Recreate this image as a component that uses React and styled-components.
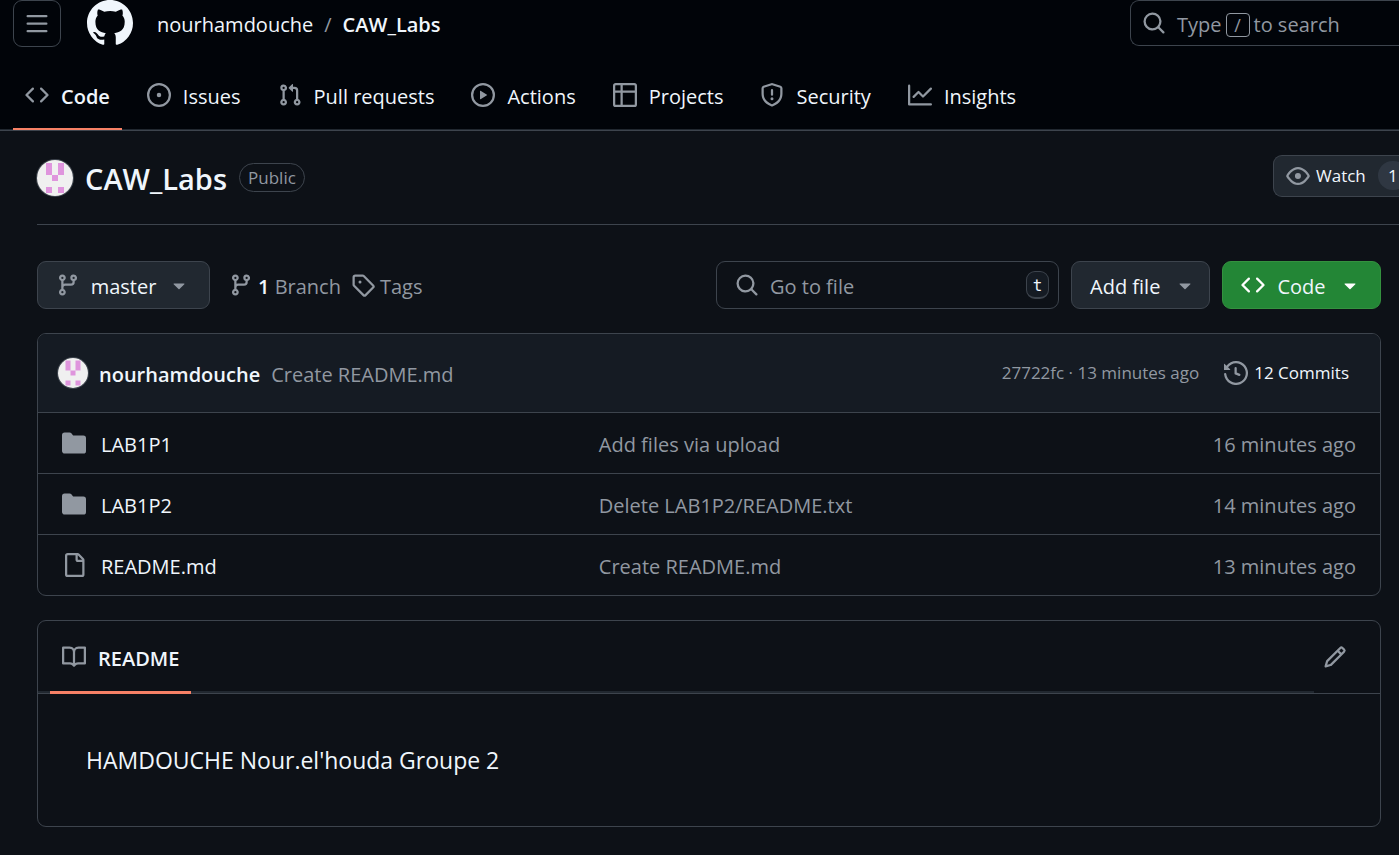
import React from "react";
import styled, { createGlobalStyle } from "styled-components";

const color = {
  canvas: "#0d1117",
  inset: "#010409",
  panel: "#151b23",
  control: "#212830",
  border: "#3d444d",
  text: "#f0f6fc",
  muted: "#9198a1",
  accent: "#f78166",
  green: "#238636",
};

const GlobalStyle = createGlobalStyle`
  *, *::before, *::after { box-sizing: border-box; }
  body {
    margin: 0;
    min-height: 100vh;
    background: ${color.canvas};
    color: ${color.text};
    font-family: "Open Sans", "Noto Sans", sans-serif;
    font-size: 20px;
    line-height: 30px;
  }
  button, input { font: inherit; color: inherit; }
  button { cursor: pointer; }
  a { color: inherit; text-decoration: none; }
  h1, p { margin: 0; }
`;

const paths = {
  menu: "M1 2.75A.75.75 0 0 1 1.75 2h12.5a.75.75 0 0 1 0 1.5H1.75A.75.75 0 0 1 1 2.75Zm0 5A.75.75 0 0 1 1.75 7h12.5a.75.75 0 0 1 0 1.5H1.75A.75.75 0 0 1 1 7.75ZM1.75 12h12.5a.75.75 0 0 1 0 1.5H1.75a.75.75 0 0 1 0-1.5Z",
  github: "M8 0c4.42 0 8 3.58 8 8a8.013 8.013 0 0 1-5.45 7.59c-.4.08-.55-.17-.55-.38 0-.27.01-1.13.01-2.2 0-.75-.25-1.23-.54-1.48 1.78-.2 3.65-.88 3.65-3.95 0-.88-.31-1.59-.82-2.15.08-.2.36-1.02-.08-2.12 0 0-.67-.22-2.2.82-.64-.18-1.32-.27-2-.27-.68 0-1.36.09-2 .27-1.53-1.03-2.2-.82-2.2-.82-.44 1.1-.16 1.92-.08 2.12-.51.56-.82 1.28-.82 2.15 0 3.06 1.86 3.75 3.64 3.95-.23.2-.44.55-.51 1.07-.46.21-1.61.55-2.33-.66-.15-.24-.6-.83-1.23-.82-.67.01-.27.38.01.53.34.19.73.9.82 1.13.16.45.68 1.31 2.69.94 0 .67.01 1.3.01 1.49 0 .21-.15.45-.55.38A7.995 7.995 0 0 1 0 8c0-4.42 3.58-8 8-8Z",
  code: "m11.28 3.22 4.25 4.25a.75.75 0 0 1 0 1.06l-4.25 4.25a.749.749 0 0 1-1.275-.326.749.749 0 0 1 .215-.734L13.94 8l-3.72-3.72a.749.749 0 0 1 .326-1.275.749.749 0 0 1 .734.215Zm-6.56 0a.751.751 0 0 1 1.042.018.751.751 0 0 1 .018 1.042L2.06 8l3.72 3.72a.749.749 0 0 1-.326 1.275.749.749 0 0 1-.734-.215L.47 8.53a.75.75 0 0 1 0-1.06Z",
  issue: "M8 9.5a1.5 1.5 0 1 0 0-3 1.5 1.5 0 0 0 0 3Z M8 0a8 8 0 1 1 0 16A8 8 0 0 1 8 0ZM1.5 8a6.5 6.5 0 1 0 13 0 6.5 6.5 0 0 0-13 0Z",
  pull: "M1.5 3.25a2.25 2.25 0 1 1 3 2.122v5.256a2.251 2.251 0 1 1-1.5 0V5.372A2.25 2.25 0 0 1 1.5 3.25Zm5.677-.177L9.573.677A.25.25 0 0 1 10 .854V2.5h1A2.5 2.5 0 0 1 13.5 5v5.628a2.251 2.251 0 1 1-1.5 0V5a1 1 0 0 0-1-1h-1v1.646a.25.25 0 0 1-.427.177L7.177 3.427a.25.25 0 0 1 0-.354ZM3.75 2.5a.75.75 0 1 0 0 1.5.75.75 0 0 0 0-1.5Zm0 9.5a.75.75 0 1 0 0 1.5.75.75 0 0 0 0-1.5Zm8.25.75a.75.75 0 1 0 1.5 0 .75.75 0 0 0-1.5 0Z",
  play: "M8 0a8 8 0 1 1 0 16A8 8 0 0 1 8 0ZM1.5 8a6.5 6.5 0 1 0 13 0 6.5 6.5 0 0 0-13 0Zm4.879-2.773 4.264 2.559a.25.25 0 0 1 0 .428l-4.264 2.559A.25.25 0 0 1 6 10.559V5.442a.25.25 0 0 1 .379-.215Z",
  table: "M0 1.75C0 .784.784 0 1.75 0h12.5C15.216 0 16 .784 16 1.75v12.5A1.75 1.75 0 0 1 14.25 16H1.75A1.75 1.75 0 0 1 0 14.25ZM6.5 6.5v8h7.75a.25.25 0 0 0 .25-.25V6.5Zm8-1.5V1.75a.25.25 0 0 0-.25-.25H6.5V5Zm-13 1.5v7.75c0 .138.112.25.25.25H5v-8ZM5 5V1.5H1.75a.25.25 0 0 0-.25.25V5Z",
  shield: "M7.467.133a1.748 1.748 0 0 1 1.066 0l5.25 1.68A1.75 1.75 0 0 1 15 3.48V7c0 1.566-.32 3.182-1.303 4.682-.983 1.498-2.585 2.813-5.032 3.855a1.697 1.697 0 0 1-1.33 0c-2.447-1.042-4.049-2.357-5.032-3.855C1.32 10.182 1 8.566 1 7V3.48a1.75 1.75 0 0 1 1.217-1.667Zm.61 1.429a.25.25 0 0 0-.153 0l-5.25 1.68a.25.25 0 0 0-.174.238V7c0 1.358.275 2.666 1.057 3.86.784 1.194 2.121 2.34 4.366 3.297a.196.196 0 0 0 .154 0c2.245-.956 3.582-2.104 4.366-3.298C13.225 9.666 13.5 8.36 13.5 7V3.48a.251.251 0 0 0-.174-.237l-5.25-1.68ZM8.75 4.75v3a.75.75 0 0 1-1.5 0v-3a.75.75 0 0 1 1.5 0ZM9 10.5a1 1 0 1 1-2 0 1 1 0 0 1 2 0Z",
  graph: "M1.5 1.75V13.5h13.75a.75.75 0 0 1 0 1.5H.75a.75.75 0 0 1-.75-.75V1.75a.75.75 0 0 1 1.5 0Zm14.28 2.53-5.25 5.25a.75.75 0 0 1-1.06 0L7 7.06 4.28 9.78a.751.751 0 0 1-1.042-.018.751.751 0 0 1-.018-1.042l3.25-3.25a.75.75 0 0 1 1.06 0L10 7.94l4.72-4.72a.751.751 0 0 1 1.042.018.751.751 0 0 1 .018 1.042Z",
  search: "M10.68 11.74a6 6 0 0 1-7.922-8.982 6 6 0 0 1 8.982 7.922l3.04 3.04a.749.749 0 0 1-.326 1.275.749.749 0 0 1-.734-.215ZM11.5 7a4.499 4.499 0 1 0-8.997 0A4.499 4.499 0 0 0 11.5 7Z",
  eye: "M8 2c1.981 0 3.671.992 4.933 2.078 1.27 1.091 2.187 2.345 2.637 3.023a1.62 1.62 0 0 1 0 1.798c-.45.678-1.367 1.932-2.637 3.023C11.67 13.008 9.981 14 8 14c-1.981 0-3.671-.992-4.933-2.078C1.797 10.83.88 9.576.43 8.898a1.62 1.62 0 0 1 0-1.798c.45-.677 1.367-1.931 2.637-3.022C4.33 2.992 6.019 2 8 2ZM1.679 7.932a.12.12 0 0 0 0 .136c.411.622 1.241 1.75 2.366 2.717C5.176 11.758 6.527 12.5 8 12.5c1.473 0 2.825-.742 3.955-1.715 1.124-.967 1.954-2.096 2.366-2.717a.12.12 0 0 0 0-.136c-.412-.621-1.242-1.75-2.366-2.717C10.824 4.242 9.473 3.5 8 3.5c-1.473 0-2.825.742-3.955 1.715-1.124.967-1.954 2.096-2.366 2.717ZM8 10a2 2 0 1 1-.001-3.999A2 2 0 0 1 8 10Z",
  branch: "M9.5 3.25a2.25 2.25 0 1 1 3 2.122V6A2.5 2.5 0 0 1 10 8.5H6a1 1 0 0 0-1 1v1.128a2.251 2.251 0 1 1-1.5 0V5.372a2.25 2.25 0 1 1 1.5 0v1.836A2.493 2.493 0 0 1 6 7h4a1 1 0 0 0 1-1v-.628A2.25 2.25 0 0 1 9.5 3.25Zm-6 0a.75.75 0 1 0 1.5 0 .75.75 0 0 0-1.5 0Zm8.25-.75a.75.75 0 1 0 0 1.5.75.75 0 0 0 0-1.5ZM4.25 12a.75.75 0 1 0 0 1.5.75.75 0 0 0 0-1.5Z",
  tag: "M1 7.775V2.75C1 1.784 1.784 1 2.75 1h5.025c.464 0 .91.184 1.238.513l6.25 6.25a1.75 1.75 0 0 1 0 2.474l-5.026 5.026a1.75 1.75 0 0 1-2.474 0l-6.25-6.25A1.752 1.752 0 0 1 1 7.775Zm1.5 0c0 .066.026.13.073.177l6.25 6.25a.25.25 0 0 0 .354 0l5.025-5.025a.25.25 0 0 0 0-.354l-6.25-6.25a.25.25 0 0 0-.177-.073H2.75a.25.25 0 0 0-.25.25ZM6 5a1 1 0 1 1 0 2 1 1 0 0 1 0-2Z",
  caret: "m4.427 7.427 3.396 3.396a.25.25 0 0 0 .354 0l3.396-3.396A.25.25 0 0 0 11.396 7H4.604a.25.25 0 0 0-.177.427Z",
  history: "m.427 1.927 1.215 1.215a8.002 8.002 0 1 1-1.6 5.685.75.75 0 1 1 1.493-.154 6.5 6.5 0 1 0 1.18-4.458l1.358 1.358A.25.25 0 0 1 3.896 6H.25A.25.25 0 0 1 0 5.75V2.104a.25.25 0 0 1 .427-.177ZM7.75 4a.75.75 0 0 1 .75.75v2.992l2.028.812a.75.75 0 0 1-.557 1.392l-2.5-1A.751.751 0 0 1 7 8.25v-3.5A.75.75 0 0 1 7.75 4Z",
  folder: "M1.75 1A1.75 1.75 0 0 0 0 2.75v10.5C0 14.216.784 15 1.75 15h12.5A1.75 1.75 0 0 0 16 13.25v-8.5A1.75 1.75 0 0 0 14.25 3H7.5a.25.25 0 0 1-.2-.1l-.9-1.2C6.07 1.26 5.55 1 5 1H1.75Z",
  file: "M2 1.75C2 .784 2.784 0 3.75 0h6.586c.464 0 .909.184 1.237.513l2.914 2.914c.329.328.513.773.513 1.237v9.586A1.75 1.75 0 0 1 13.25 16h-9.5A1.75 1.75 0 0 1 2 14.25Zm1.75-.25a.25.25 0 0 0-.25.25v12.5c0 .138.112.25.25.25h9.5a.25.25 0 0 0 .25-.25V6h-2.75A1.75 1.75 0 0 1 9 4.25V1.5Zm6.75.062V4.25c0 .138.112.25.25.25h2.688l-.011-.013-2.914-2.914-.013-.011Z",
  book: "M0 1.75A.75.75 0 0 1 .75 1h4.253c1.227 0 2.317.59 3 1.501A3.743 3.743 0 0 1 11.006 1h4.245a.75.75 0 0 1 .75.75v10.5a.75.75 0 0 1-.75.75h-4.507a2.25 2.25 0 0 0-1.591.659l-.622.621a.75.75 0 0 1-1.06 0l-.622-.621A2.25 2.25 0 0 0 5.258 13H.75a.75.75 0 0 1-.75-.75Zm7.251 10.324.004-5.073-.002-2.253A2.25 2.25 0 0 0 5.003 2.5H1.5v9h3.757a3.75 3.75 0 0 1 1.994.574ZM8.755 4.75l-.004 7.322a3.752 3.752 0 0 1 1.992-.572H14.5v-9h-3.495a2.25 2.25 0 0 0-2.25 2.25Z",
  pencil: "M11.013 1.427a1.75 1.75 0 0 1 2.474 0l1.086 1.086a1.75 1.75 0 0 1 0 2.474l-8.61 8.61c-.21.21-.47.364-.756.445l-3.251.93a.75.75 0 0 1-.927-.928l.929-3.25c.081-.286.235-.547.445-.758l8.61-8.61Zm.176 4.823L9.75 4.81l-6.286 6.287a.253.253 0 0 0-.064.108l-.558 1.953 1.953-.558a.253.253 0 0 0 .108-.064Zm1.238-3.763a.25.25 0 0 0-.354 0L10.811 3.75l1.439 1.44 1.263-1.263a.25.25 0 0 0 0-.354Z",
};

const Glyph = styled.svg`
  display: block;
  flex: none;
  width: ${(p) => p.$size}px;
  height: ${(p) => p.$size}px;
  fill: ${(p) => p.$tone};
`;

function Icon({ name, size = 24, tone = color.muted }) {
  return (
    <Glyph viewBox="0 0 16 16" $size={size} $tone={tone} aria-hidden="true">
      <path d={paths[name]} />
    </Glyph>
  );
}

const Face = styled.svg`
  display: block;
  flex: none;
  width: ${(p) => p.$size}px;
  height: ${(p) => p.$size}px;
  border-radius: 50%;
  box-shadow: 0 0 0 1px ${color.border};
`;

function Avatar({ size }) {
  return (
    <Face viewBox="0 0 36 36" $size={size} role="img" aria-label="nourhamdouche">
      <rect width="36" height="36" fill="#f0f0f0" />
      <path
        fill="#df95dd"
        d="M9 3h6v12h-6zM21 3h6v12h-6zM15 15h6v6h-6zM9 27h6v6h-6zM21 27h6v6h-6z"
      />
    </Face>
  );
}

const Label = styled.span`
  display: inline-block;
  padding-top: 4px;
`;

const Page = styled.div`
  overflow-x: hidden;
`;

const Header = styled.header`
  background: ${color.inset};
  border-bottom: 1px solid ${color.border};
`;

const TopBar = styled.div`
  display: flex;
  align-items: flex-start;
  height: 61px;
  padding-left: 13px;
`;

const MenuButton = styled.button`
  display: grid;
  place-items: center;
  width: 48px;
  height: 47px;
  padding: 0;
  background: transparent;
  border: 1px solid ${color.border};
  border-radius: 9px;
`;

const Logo = styled.a`
  margin-left: 26px;
`;

const Crumbs = styled.nav`
  display: flex;
  gap: 11px;
  margin-left: 24px;
  line-height: 50px;
`;

const Slash = styled.span`
  color: ${color.muted};
`;

const Strong = styled.a`
  font-weight: 600;
`;

const SearchButton = styled.button`
  display: flex;
  align-items: center;
  gap: 11px;
  width: 269px;
  height: 46px;
  margin-left: auto;
  padding: 0 0 0 11px;
  background: transparent;
  color: ${color.muted};
  border: 1px solid ${color.border};
  border-right: 0;
  border-radius: 9px 0 0 9px;
`;

const SearchHint = styled.span`
  display: flex;
  align-items: center;
  gap: 4px;
  padding-top: 3px;
`;

const SlashKey = styled.kbd`
  width: 24px;
  height: 24px;
  border: 1px solid ${color.muted};
  border-radius: 4px;
  font: inherit;
  font-size: 18px;
  line-height: 22px;
  text-align: center;
`;

const RepoNav = styled.nav`
  display: flex;
  gap: 13px;
  padding-left: 13px;
  box-shadow: inset 0 -1px ${color.control};
`;

const Tab = styled.a`
  display: flex;
  align-items: center;
  gap: 12px;
  height: 69px;
  padding: 0 12px;
  font-weight: ${(p) => (p.$active ? 600 : 400)};
  border-bottom: 2px solid ${(p) => (p.$active ? color.accent : "transparent")};
  margin-bottom: ${(p) => (p.$active ? "-1px" : "0")};
`;

const RepoHeader = styled.div`
  display: flex;
  align-items: center;
  height: 94px;
  margin-left: 37px;
  border-bottom: 1px solid ${color.border};
`;

const RepoName = styled.h1`
  margin: 0 12px;
  padding-top: 2px;
  font-size: 29px;
  font-weight: 600;
  line-height: 42px;
`;

const Visibility = styled.span`
  height: 29px;
  padding: 0 8px;
  border: 1px solid ${color.border};
  border-radius: 15px;
  color: ${color.muted};
  font-size: 17px;
  line-height: 28px;
`;

const WatchButton = styled.button`
  display: flex;
  align-items: center;
  gap: 6px;
  width: 126px;
  height: 42px;
  margin: 0 0 4px auto;
  padding: 0 0 0 12px;
  background: ${color.control};
  border: 1px solid ${color.border};
  border-right: 0;
  border-radius: 9px 0 0 9px;
  font-size: 17px;
  overflow: hidden;
`;

const Counter = styled.span`
  flex: none;
  width: 30px;
  height: 29px;
  margin-left: 6px;
  background: #2f3742;
  border-radius: 15px;
  line-height: 29px;
  text-align: center;
`;

const Main = styled.main`
  display: flex;
  flex-direction: column;
  gap: 24px;
  padding: 36px 18px 28px 37px;
`;

const Toolbar = styled.div`
  display: flex;
  align-items: center;
  gap: 12px;
`;

const Button = styled.button`
  display: flex;
  align-items: center;
  justify-content: space-between;
  height: 48px;
  width: ${(p) => p.$width}px;
  padding: 0 ${(p) => p.$end || 18}px 0 18px;
  background: ${(p) => (p.$primary ? color.green : color.control)};
  border: 1px solid ${(p) => (p.$primary ? "#34913f" : color.border)};
  border-radius: 9px;
  font-weight: ${(p) => (p.$primary ? 500 : 400)};
`;

const RefLinks = styled.div`
  display: flex;
  gap: 10px;
  margin-left: 7px;
`;

const RefLink = styled.a`
  display: flex;
  align-items: center;
  gap: 5px;
  color: ${color.muted};

  b {
    color: ${color.text};
    font-weight: 600;
  }
`;

const FileSearch = styled.label`
  display: flex;
  align-items: center;
  gap: 11px;
  width: 343px;
  height: 48px;
  margin-left: auto;
  padding: 0 9px 0 18px;
  border: 1px solid ${color.border};
  border-radius: 9px;
`;

const FileInput = styled.input`
  flex: 1;
  min-width: 0;
  padding: 4px 0 0;
  background: transparent;
  border: 0;
  outline: 0;

  &::placeholder {
    color: ${color.muted};
    opacity: 1;
  }
`;

const KeyCap = styled.kbd`
  width: 23px;
  height: 28px;
  background: ${color.panel};
  border: 1px solid ${color.border};
  border-bottom-width: 2px;
  border-radius: 9px;
  font-family: "DejaVu Sans Mono", monospace;
  font-size: 16px;
  line-height: 27px;
  text-align: center;
`;

const Box = styled.section`
  border: 1px solid ${color.border};
  border-radius: 9px;
  overflow: hidden;
`;

const CommitBar = styled.div`
  display: flex;
  align-items: center;
  gap: 11px;
  height: 78px;
  padding: 0 31px 0 20px;
  background: ${color.panel};
`;

const Muted = styled.a`
  color: ${color.muted};
`;

const CommitMeta = styled.div`
  display: flex;
  align-items: center;
  gap: 25px;
  margin-left: auto;
  color: ${color.muted};
  font-size: 17px;
`;

const CommitCount = styled.a`
  display: flex;
  align-items: center;
  gap: 6px;
  color: ${color.text};
`;

const FileTable = styled.table`
  width: 100%;
  border-collapse: separate;
  border-spacing: 0;
  table-layout: fixed;
`;

const Cell = styled.td`
  width: ${(p) => p.$width};
  height: 61px;
  padding: 0 24px;
  border-top: 1px solid ${color.border};
  color: ${color.muted};
  text-align: ${(p) => p.$align || "left"};
`;

const FileLink = styled.a`
  display: flex;
  align-items: center;
  gap: 15px;
  color: ${color.text};
`;

const ReadmeBar = styled.div`
  display: flex;
  align-items: center;
  height: 73px;
  border-bottom: 1px solid ${color.border};
`;

const ReadmeTabs = styled.nav`
  display: flex;
  flex: 1;
  height: 72px;
  padding-left: 12px;
  box-shadow: inset 0 -2px ${color.control};
`;

const ReadmeTab = styled(Tab)`
  height: 73px;
  padding-top: 2px;
  border-bottom-width: 3px;
`;

const EditButton = styled.button`
  display: grid;
  place-items: center;
  width: 42px;
  height: 42px;
  margin-right: 24px;
  padding: 0;
  background: transparent;
  border: 0;
`;

const ReadmeBody = styled.p`
  padding: 48px;
  font-size: 23px;
  line-height: 36px;
`;

const tabs = [
  ["code", "Code"],
  ["issue", "Issues"],
  ["pull", "Pull requests"],
  ["play", "Actions"],
  ["table", "Projects"],
  ["shield", "Security"],
  ["graph", "Insights"],
];

const files = [
  ["folder", "LAB1P1", "Add files via upload", "16 minutes ago"],
  ["folder", "LAB1P2", "Delete LAB1P2/README.txt", "14 minutes ago"],
  ["file", "README.md", "Create README.md", "13 minutes ago"],
];

export default function App() {
  return (
    <Page>
      <GlobalStyle />
      <Header>
        <TopBar>
          <MenuButton aria-label="Open menu">
            <Icon name="menu" />
          </MenuButton>
          <Logo href="#" aria-label="Homepage">
            <Icon name="github" size={46} tone={color.text} />
          </Logo>
          <Crumbs aria-label="Breadcrumb">
            <a href="#">nourhamdouche</a>
            <Slash>/</Slash>
            <Strong href="#">CAW_Labs</Strong>
          </Crumbs>
          <SearchButton>
            <Icon name="search" />
            <SearchHint>
              Type <SlashKey>/</SlashKey> to search
            </SearchHint>
          </SearchButton>
        </TopBar>
        <RepoNav aria-label="Repository">
          {tabs.map(([icon, label], i) => (
            <Tab key={label} href="#" $active={i === 0}>
              <Icon name={icon} />
              <Label>{label}</Label>
            </Tab>
          ))}
        </RepoNav>
      </Header>

      <RepoHeader>
        <Avatar size={36} />
        <RepoName>CAW_Labs</RepoName>
        <Visibility>Public</Visibility>
        <WatchButton>
          <Icon name="eye" />
          Watch
          <Counter>1</Counter>
        </WatchButton>
      </RepoHeader>

      <Main>
        <Toolbar>
          <Button $width={173}>
            <Icon name="branch" />
            <Label>master</Label>
            <Icon name="caret" />
          </Button>
          <RefLinks>
            <RefLink href="#">
              <Icon name="branch" />
              <Label>
                <b>1</b> Branch
              </Label>
            </RefLink>
            <RefLink href="#">
              <Icon name="tag" />
              <Label>Tags</Label>
            </RefLink>
          </RefLinks>
          <FileSearch>
            <Icon name="search" />
            <FileInput type="text" placeholder="Go to file" aria-label="Go to file" />
            <KeyCap>t</KeyCap>
          </FileSearch>
          <Button $width={139} $end={12}>
            <Label>Add file</Label>
            <Icon name="caret" />
          </Button>
          <Button $width={159} $primary>
            <Icon name="code" tone="#ffffff" />
            <Label>Code</Label>
            <Icon name="caret" tone="#ffffff" />
          </Button>
        </Toolbar>

        <Box>
          <CommitBar>
            <Avatar size={30} />
            <Strong href="#">
              <Label>nourhamdouche</Label>
            </Strong>
            <Muted href="#">
              <Label>Create README.md</Label>
            </Muted>
            <CommitMeta>
              <span>27722fc · 13 minutes ago</span>
              <CommitCount href="#">
                <Icon name="history" />
                12 Commits
              </CommitCount>
            </CommitMeta>
          </CommitBar>
          <FileTable aria-label="Files">
            <tbody>
              {files.map(([icon, name, message, date]) => (
                <tr key={name}>
                  <Cell $width="40%">
                    <FileLink href="#">
                      <Icon name={icon} />
                      <Label>{name}</Label>
                    </FileLink>
                  </Cell>
                  <Cell $width="40%">
                    <Label>{message}</Label>
                  </Cell>
                  <Cell $width="20%" $align="right">
                    <Label>{date}</Label>
                  </Cell>
                </tr>
              ))}
            </tbody>
          </FileTable>
        </Box>

        <Box>
          <ReadmeBar>
            <ReadmeTabs aria-label="Repository files">
              <ReadmeTab href="#" $active>
                <Icon name="book" />
                <Label>README</Label>
              </ReadmeTab>
            </ReadmeTabs>
            <EditButton aria-label="Edit file">
              <Icon name="pencil" />
            </EditButton>
          </ReadmeBar>
          <ReadmeBody>HAMDOUCHE Nour.el&apos;houda Groupe 2</ReadmeBody>
        </Box>
      </Main>
    </Page>
  );
}
